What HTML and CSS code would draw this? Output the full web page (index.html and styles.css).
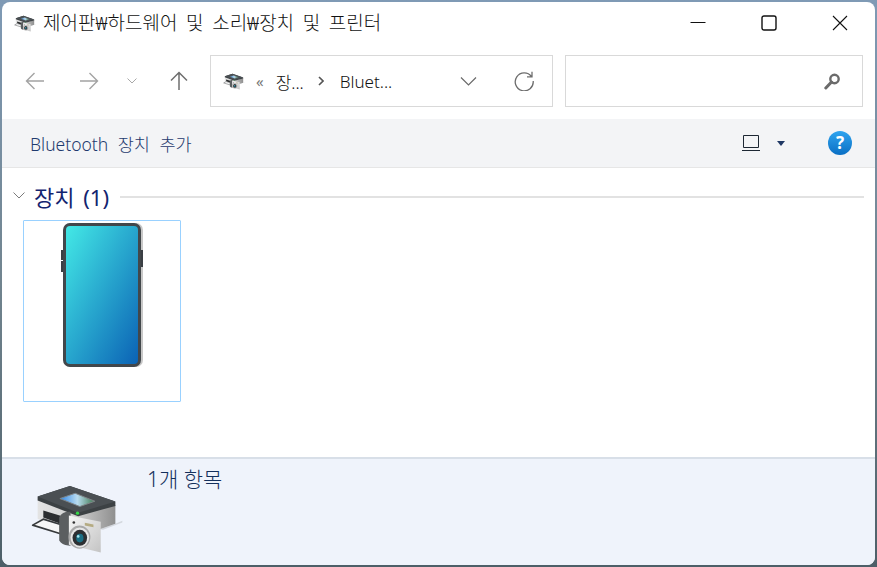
FILE: index.html
```html
<!DOCTYPE html>
<html lang="ko">
<head>
<meta charset="utf-8">
<title>장치 및 프린터</title>
<link rel="stylesheet" href="styles.css">
</head>
<body>
<svg class="defs" width="0" height="0" aria-hidden="true">
  <defs>
    <linearGradient id="screen" x1="0" y1="0" x2="1" y2="1">
      <stop offset="0" stop-color="#43e9e6"/>
      <stop offset="1" stop-color="#0b62b5"/>
    </linearGradient>
    <linearGradient id="helpg" x1="0" y1="0" x2="0" y2="1">
      <stop offset="0" stop-color="#2fa4ef"/>
      <stop offset="1" stop-color="#0a6fc4"/>
    </linearGradient>
    <linearGradient id="photo" x1="0" y1="0" x2="1" y2="0">
      <stop offset="0" stop-color="#2f86e6"/>
      <stop offset="0.5" stop-color="#b9dcf0"/>
      <stop offset="1" stop-color="#3d7a50"/>
    </linearGradient>
    <linearGradient id="camBody" x1="0" y1="0" x2="1" y2="1">
      <stop offset="0" stop-color="#f6f6f6"/>
      <stop offset="1" stop-color="#c4c4c4"/>
    </linearGradient>
    <linearGradient id="printFace" x1="0" y1="0" x2="1" y2="0">
      <stop offset="0" stop-color="#e4e4e4"/>
      <stop offset="0.5" stop-color="#cfcfcf"/>
      <stop offset="1" stop-color="#8f8f8f"/>
    </linearGradient>
    <symbol id="device" viewBox="90 100 280 215">
      <path d="M300 238 L347 222 L368 213 L368 218 L310 240 Z" fill="#c9ccd2" opacity=".7"/>
      <path d="M113 148 L235 195 L347 165 L347 222 L300 238 L180 240 L113 207 Z" fill="url(#printFace)"/>
      <path d="M130 182 L182 198 L182 222 L130 203 Z" fill="#2b2d2f"/>
      <path d="M98 226 L130 208 L182 224 L182 252 Z" fill="#f6f6f6" stroke="#36393b" stroke-width="5" stroke-linejoin="round"/>
      <path d="M113 140 L210 108 L347 155 L347 168 L235 199 L113 152 Z" fill="#3c4144"/>
      <path d="M113 140 L210 108 L347 155 L235 189 Z" fill="#4a4f53"/>
      <path d="M180 146 L226 130 L285 154 L240 170 Z" fill="url(#photo)" stroke="#7e8588" stroke-width="3"/>
      <circle cx="233" cy="190" r="5" fill="#35d846"/>
      <path d="M178 202 Q188 184 212 186 L212 288 L205 287 Q186 285 178 272 Z" fill="#5b5e60"/>
      <path d="M207 197 L303 216 L303 308 L207 285 Z" fill="url(#camBody)"/>
      <ellipse cx="239" cy="262" rx="33" ry="35" fill="#a9a9a9"/>
      <ellipse cx="240" cy="263" rx="28" ry="30" fill="#e6e6e6"/>
      <ellipse cx="240" cy="264" rx="22" ry="24" fill="#2d3033"/>
      <ellipse cx="240" cy="265" rx="11" ry="13" fill="#1c6f84"/>
      <circle cx="235" cy="260" r="4" fill="#a4e6ef"/>
      <path d="M255 219 L281 224 L281 232 L255 227 Z" fill="#b5ab82"/>
      <circle cx="222" cy="218" r="4" fill="#333"/>
    </symbol>
  </defs>
</svg>
<main class="window">
  <header class="titlebar">
    <svg class="icon-small"><use href="#device"/></svg>
    <span class="title">제어판₩하드웨어 및 소리₩장치 및 프린터</span>
    <div class="caption">
      <svg class="cap-btn" viewBox="0 0 16 16"><path d="M0.5 7.5H15.5" stroke="#111" fill="none"/></svg>
      <svg class="cap-btn" viewBox="0 0 16 16"><rect x="1" y="1" width="14" height="14" rx="2" stroke="#111" stroke-width="1.4" fill="none"/></svg>
      <svg class="cap-btn" viewBox="0 0 16 16"><path d="M1 1L15 15M15 1L1 15" stroke="#111" stroke-width="1.1" fill="none"/></svg>
    </div>
  </header>

  <nav class="navbar">
    <svg class="nav-arrow" viewBox="0 0 20 20"><path d="M19 10H1.5M9.5 2L1.5 10L9.5 18" stroke="#a3a3a3" stroke-width="1.4" fill="none"/></svg>
    <svg class="nav-arrow forward" viewBox="0 0 20 20"><path d="M1 10H18.5M10.5 2L18.5 10L10.5 18" stroke="#a3a3a3" stroke-width="1.4" fill="none"/></svg>
    <svg class="nav-drop" viewBox="0 0 10 6"><path d="M.5 .5L5 5L9.5 .5" stroke="#a8a8a8" fill="none"/></svg>
    <svg class="nav-arrow up" viewBox="0 0 20 20"><path d="M10 19V1.5M2 9.5L10 1.5L18 9.5" stroke="#6e6e6e" stroke-width="1.5" fill="none"/></svg>
    <div class="address">
      <svg class="icon-small"><use href="#device"/></svg>
      <span class="chev-double">«</span>
      <span class="crumb crumb-first">장...</span>
      <svg class="crumb-sep" viewBox="0 0 6 10"><path d="M1 1L5 5L1 9" stroke="#555" stroke-width="1.6" fill="none"/></svg>
      <span class="crumb">Bluet...</span>
      <svg class="addr-drop" viewBox="0 0 16 9"><path d="M.5 .5L8 8L15.5 .5" stroke="#6a6a6a" stroke-width="1.2" fill="none"/></svg>
      <svg class="refresh" viewBox="0 0 20 20"><path d="M17.5 5.5A9 9 0 1 0 19.2 10M18 .8V5.8H13" stroke="#6d6d6d" stroke-width="1.3" fill="none"/></svg>
    </div>
    <div class="search">
      <svg class="search-icon" viewBox="0 0 17 17"><circle cx="10.5" cy="6" r="4.2" stroke="#6b6b6b" stroke-width="2.4" fill="none"/><path d="M7.5 9L1.8 15" stroke="#6b6b6b" stroke-width="3" stroke-linecap="round"/></svg>
    </div>
  </nav>

  <div class="commandbar">
    <span class="command">Bluetooth 장치 추가</span>
    <div class="command-right">
      <svg class="view-icon" viewBox="0 0 18 18"><path d="M1.5 1.5H16.5V13.5H1.5Z" stroke="#1d2733" fill="none"/><path d="M0 16.5H18" stroke="#1d2733" fill="none"/></svg>
      <svg class="view-drop" viewBox="0 0 8 5"><path d="M0 0H8L4 5Z" fill="#1f3864"/></svg>
      <svg class="help" viewBox="0 0 24 24"><circle cx="12" cy="12" r="12" fill="url(#helpg)"/><text class="help-q" x="12" y="18" text-anchor="middle">?</text></svg>
    </div>
  </div>

  <section class="content">
    <div class="group-head">
      <svg class="group-chev" viewBox="0 0 12 7"><path d="M.5 .5L6 6L11.5 .5" stroke="#7b7b7b" fill="none"/></svg>
      <span class="group-title">장치 (1)</span>
      <span class="group-line"></span>
    </div>
    <div class="tile">
      <svg class="phone" viewBox="0 0 84 148">
        <rect x="3.5" y="1" width="79.5" height="144" rx="7" fill="#c8c8c8"/>
        <rect x="1" y="28" width="3" height="10" fill="#3a3f44"/>
        <rect x="1" y="39" width="3" height="11" fill="#3a3f44"/>
        <rect x="80" y="28" width="3" height="17" fill="#3a3f44"/>
        <rect x="3" y="1" width="78" height="144" rx="7" fill="#42474b"/>
        <rect x="6" y="4" width="72" height="138" rx="4" fill="url(#screen)"/>
      </svg>
    </div>
  </section>

  <footer class="details">
    <svg class="icon-large"><use href="#device"/></svg>
    <span class="count">1개 항목</span>
  </footer>
</main>
</body>
</html>
```
FILE: styles.css
```css
* { box-sizing: border-box; }
html, body { margin: 0; height: 100%; }
body {
  padding: 2px;
  overflow: hidden;
  background: linear-gradient(180deg, #7f9ab5 0%, #71848f 50%, #4d5f68 100%);
  font-family: "Noto Sans", "Noto Sans CJK KR", sans-serif;
}
.defs { position: absolute; }
.window {
  height: 100%;
  display: flex;
  flex-direction: column;
  background: #fff;
  border-radius: 8px;
  overflow: hidden;
}
.titlebar {
  height: 42px;
  flex: none;
  display: flex;
  align-items: center;
  padding-left: 12px;
}
.icon-small { width: 22px; height: 17px; flex: none; }
.title {
  margin: -2px 0 0 7px;
  font-size: 19px;
  font-weight: 300;
  word-spacing: 3.7px;
  color: #111;
  white-space: nowrap;
}
.caption {
  margin-left: auto;
  display: flex;
  align-items: center;
  gap: 55px;
  padding-right: 27px;
}
.cap-btn { width: 16px; height: 16px; }
.navbar {
  height: 75px;
  flex: none;
  display: flex;
  align-items: center;
  padding: 0 12px 1px 23px;
}
.nav-arrow { width: 20px; height: 20px; flex: none; }
.forward { margin-left: 34px; }
.nav-drop { width: 10px; height: 6px; margin-left: 28px; flex: none; }
.up { margin-left: 32px; }
.address {
  width: 343px;
  height: 52px;
  margin-left: 21px;
  border: 1px solid #d9d9d9;
  display: flex;
  align-items: center;
  padding-left: 12px;
  flex: none;
}
.chev-double { margin-left: 11px; font-size: 15px; color: #777; line-height: 1; }
.crumb { font-size: 17px; font-weight: 300; color: #111; }
.crumb-first { margin-left: 12px; }
.crumb-sep { width: 6px; height: 10px; margin: 0 16px 0 14px; flex: none; }
.addr-drop { width: 17px; height: 9px; margin-left: auto; flex: none; }
.refresh { width: 20px; height: 20px; margin: 0 18px 0 37px; flex: none; }
.search {
  width: 298px;
  height: 52px;
  margin-left: 12px;
  border: 1px solid #d9d9d9;
  display: flex;
  align-items: center;
  justify-content: flex-end;
  padding-right: 21px;
  flex: none;
}
.search-icon { width: 17px; height: 17px; }
.commandbar {
  height: 49px;
  flex: none;
  background: #f3f4f6;
  border-bottom: 1px solid #e6e6e6;
  display: flex;
  align-items: center;
  padding: 0 23px 0 28px;
}
.command { font-size: 17.5px; font-weight: 300; word-spacing: 5px; color: #1f3a6e; }
.command-right { margin-left: auto; display: flex; align-items: center; }
.view-icon { width: 18px; height: 18px; }
.view-drop { width: 8px; height: 5px; margin-left: 17px; }
.help { width: 24px; height: 24px; margin-left: 43px; }
.help-q { font-size: 17px; font-weight: 700; fill: #fff; }
.content {
  flex: 1;
  min-height: 0;
  padding: 14px 11px 0 11px;
}
.group-head { display: flex; align-items: center; height: 30px; }
.group-chev { width: 12px; height: 7px; margin-top: -3px; flex: none; }
.group-title {
  margin: -3px 0 0 9px;
  font-size: 22px;
  font-weight: 400;
  word-spacing: 3px;
  color: #13246f;
  white-space: nowrap;
}
.group-line { flex: 1; height: 2px; margin-left: 11px; background: #e2e2e2; }
.tile {
  width: 158px;
  height: 182px;
  margin: 8px 0 0 10px;
  border: 1px solid #99d1ff;
  border-radius: 1px;
  display: flex;
  justify-content: center;
  padding-top: 1px;
}
.phone { width: 84px; height: 148px; }
.details {
  height: 108px;
  flex: none;
  background: #eff3fb;
  border-top: 2px solid #d8dfe8;
  display: flex;
  align-items: flex-start;
  padding: 7px 0 0 28px;
}
.icon-large { width: 93px; height: 72px; flex: none; margin-top: 17px; }
.count { margin-left: 24px; font-size: 21px; font-weight: 300; color: #132f5c; line-height: 26px; }
```
